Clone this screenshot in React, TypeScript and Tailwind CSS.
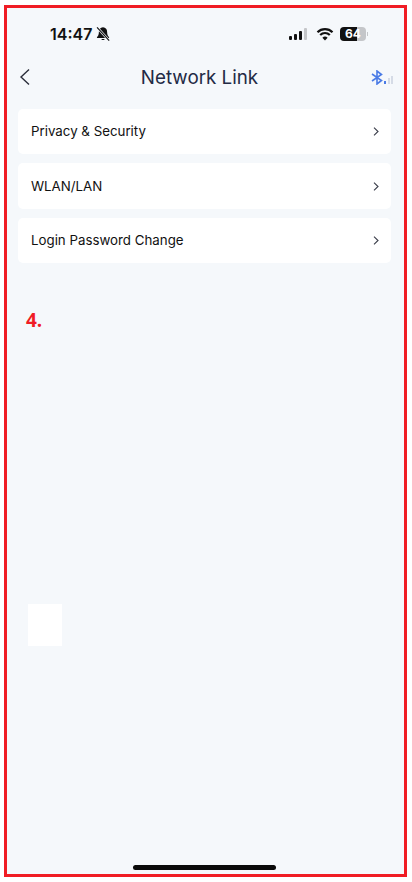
import React from 'react';

const rows = ['Privacy & Security', 'WLAN/LAN', 'Login Password Change'];

const StatusBar = () => (
  <div className="flex items-center h-[30px] mt-[11px] pl-[43px] pr-[36px] justify-between">
    <div className="flex items-center gap-[3px]">
      <span className="text-[16px] font-semibold text-[#111] leading-none font-['Inter',sans-serif]">14:47</span>
      <svg width="16" height="16" viewBox="0 0 14 14">
        <path d="M7 1.200c-2.400 0-3.600 1.900-3.600 4 0 2.300-.7 3.600-1.700 4.600v.7h10.600v-.7c-1-1-1.700-2.300-1.700-4.600 0-2.100-1.200-4-3.600-4z" fill="#111" />
        <path d="M5.500 11.300a1.600 1.600 0 0 0 3 0z" fill="#111" />
        <path d="M1.800 1.200l10.600 11.600" stroke="#f5f8fc" strokeWidth="2" />
        <path d="M1.800 1.200l10.600 11.600" stroke="#111" strokeWidth="1" />
      </svg>
    </div>
    <div className="flex items-center gap-[6px]">
      <div className="flex items-end gap-[2px] h-[12px] mr-[1px]">
        <div className="w-[3px] h-[4px] rounded-[1px] bg-[#111]" />
        <div className="w-[3px] h-[6px] rounded-[1px] bg-[#111]" />
        <div className="w-[3px] h-[9px] rounded-[1px] bg-[#111]" />
        <div className="w-[3px] h-[12px] rounded-[1px] bg-[#c4c6c9]" />
      </div>
      <svg width="18" height="13" viewBox="0 0 17 13" className="ml-[2px]">
        <path d="M1 4.300a10.600 10.600 0 0 1 15 0" fill="none" stroke="#111" strokeWidth="2.200" />
        <path d="M3.700 7a6.800 6.800 0 0 1 9.600 0" fill="none" stroke="#111" strokeWidth="2.200" />
        <path d="M8.500 12.500l-2.600-2.700a3.700 3.700 0 0 1 5.200 0z" fill="#111" />
      </svg>
      <div className="flex items-center">
        <div className="w-[26px] h-[14px] rounded-[4px] bg-[linear-gradient(to_right,#111_64%,#c4c6c9_64%)] flex items-center justify-center text-white text-[12px] font-bold leading-none font-['Inter',sans-serif]">
          64
        </div>
        <div className="w-[1px] h-[4px] ml-[1px] bg-[#c4c6c9]" />
      </div>
    </div>
  </div>
);

const Header = () => (
  <div className="flex items-center justify-between h-[32px] mt-[12px] pl-[12px] pr-[10px]">
    <svg width="12" height="18" viewBox="0 0 12 18">
      <path d="M10 1.500L2 9l8 7.500" fill="none" stroke="#2a2d3a" strokeWidth="1.400" />
    </svg>
    <span className="text-[18.8px] text-[#232a45] leading-none mt-[2px] mr-[3px] font-['Inter',sans-serif]">Network Link</span>
    <svg width="23" height="15" viewBox="0 0 23 15">
      <path d="M1 4l9.500 6.500-4.500 3.500V1l4.500 3.500L1 11" fill="none" stroke="#4a7be6" strokeWidth="1.600" />
      <rect x="13" y="11" width="2" height="3" fill="#4a7be6" />
      <rect x="17" y="8" width="2" height="6" fill="#d5dbe6" />
      <rect x="20" y="6" width="2" height="8" fill="#d5dbe6" />
    </svg>
  </div>
);

export default function App() {
  return (
    <div className="bg-white h-[882px] pl-[4px] pt-[5px]">
      <div className="flex flex-col w-[403px] h-[872px] border-[3px] border-[#f01c24] bg-[#f5f8fb]">
        <StatusBar />
        <Header />
        <div className="flex flex-col gap-[9.2px] mt-[16px] ml-[11px] w-[373px]">
          {rows.map((row) => (
            <div key={row} className="flex items-center justify-between h-[45.3px] pl-[13px] pr-[12px] bg-white rounded-[5px]">
              <span className="text-[13.3px] text-[#111] pt-[1px] font-['Inter',sans-serif]">{row}</span>
              <svg width="6" height="9" viewBox="0 0 6 9">
                <path d="M1 .7L5 4.500 1 8.300" fill="none" stroke="#3a3d4a" strokeWidth="1.100" />
              </svg>
            </div>
          ))}
        </div>
        <div className="mt-[47px] ml-[19px] text-[#f01c24] text-[19px] font-bold leading-[20px] font-['Open_Sans',sans-serif]">4.</div>
        <div className="mt-[274px] ml-[21px] w-[34px] h-[42px] bg-white" />
        <div className="mt-auto mb-[4px] ml-[126px] w-[143px] h-[5px] rounded-full bg-[#0a0a0a]" />
      </div>
    </div>
  );
}
